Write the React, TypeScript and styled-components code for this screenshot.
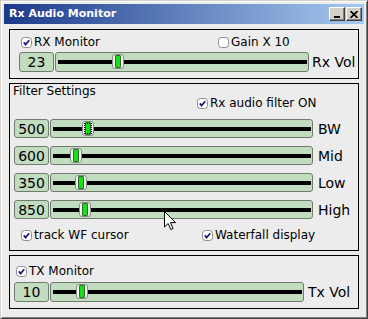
import React from 'react';
import styled, { createGlobalStyle } from 'styled-components';

const GlobalStyle = createGlobalStyle`
    html, body {
        margin: 0;
        padding: 0;
        background: #ececec;
    }
    body {
        font-family: "DejaVu Sans", "Liberation Sans", sans-serif;
        color: #000;
    }
`;

const Window = styled.div`
    position: relative;
    width: 368px;
    height: 319px;
    box-sizing: border-box;
    border: 1px solid;
    border-color: #d4d0c8 #404040 #404040 #d4d0c8;
    box-shadow: inset 1px 1px #ffffff, inset -1px -1px #808080;
    padding: 3px;
    background: #ececec;
    display: flex;
    flex-direction: column;
`;

const TitleBar = styled.div`
    height: 20px;
    flex: none;
    display: flex;
    align-items: center;
    justify-content: space-between;
    padding: 0 2px 0 5px;
    background: linear-gradient(to right, #1c3a8a, #a6caf0);
`;

const Title = styled.span`
    color: #fff;
    font-weight: bold;
    font-size: 11px;
    line-height: 14px;
`;

const TitleButtons = styled.div`
    display: flex;
    gap: 1px;
`;

const TitleButton = styled.div`
    width: 16px;
    height: 14px;
    box-sizing: border-box;
    background: #d4d0c8;
    border: 1px solid;
    border-color: #ffffff #404040 #404040 #ffffff;
    box-shadow: inset -1px -1px #808080;
    display: flex;
    align-items: center;
    justify-content: center;
`;

const Content = styled.div`
    flex: 1;
    display: flex;
    flex-direction: column;
    gap: 4px;
    padding: 5px 5px 6px 5px;
`;

const Group = styled.div<{ $h: number; $pt: number }>`
    height: ${p => p.$h}px;
    box-sizing: border-box;
    border: 1px solid #000;
    padding-top: ${p => p.$pt}px;
    display: flex;
    flex-direction: column;
`;

const GroupTitle = styled.div`
    font-size: 12px;
    line-height: 12px;
    height: 12px;
    padding-left: 3px;
`;

const CheckRow = styled.div<{ $pl: number; $col?: number; $h?: number; $mt?: number }>`
    display: grid;
    grid-template-columns: ${p => (p.$col ? `${p.$col}px auto` : 'auto')};
    justify-content: start;
    align-items: center;
    height: ${p => p.$h ?? 14}px;
    margin-top: ${p => p.$mt ?? 0}px;
    padding-left: ${p => p.$pl}px;
`;

const CheckLabel = styled.label<{ $lh?: number }>`
    display: flex;
    align-items: center;
    gap: 2px;
    font-size: 12px;
    line-height: ${p => p.$lh ?? 14}px;
    white-space: nowrap;
`;

const Box = styled.span`
    width: 11px;
    height: 11px;
    display: block;
`;

const SliderRows = styled.div<{ $mt: number }>`
    display: flex;
    flex-direction: column;
    gap: 8px;
    margin-top: ${p => p.$mt}px;
`;

const Row = styled.div<{ $pl: number; $h: number; $sw: number; $lg: number }>`
    display: grid;
    grid-template-columns: 35px ${p => p.$sw}px auto;
    column-gap: 1px;
    align-items: center;
    height: ${p => p.$h}px;
    padding-left: ${p => p.$pl}px;

    & > span:last-child {
        margin-left: ${p => p.$lg}px;
    }
`;

const ValueBox = styled.div`
    height: 100%;
    box-sizing: border-box;
    background: #c2dcc0;
    border: 1px solid #707a6e;
    border-radius: 3px;
    font-size: 14px;
    display: flex;
    align-items: center;
    justify-content: center;
`;

const Track = styled.div`
    position: relative;
    height: 100%;
    box-sizing: border-box;
    background: #c2dcc0;
    border: 1px solid #707a6e;
    border-radius: 3px;

    &::before {
        content: '';
        position: absolute;
        left: 2px;
        right: 1px;
        top: 50%;
        height: 4px;
        margin-top: -2px;
        background: #000;
    }
`;

const Thumb = styled.div<{ $focus?: boolean }>`
    position: absolute;
    top: 50%;
    margin-top: -8px;
    width: 12px;
    height: 15px;
    box-sizing: border-box;
    background: #f4f4f4;
    border: 1px solid #8a8a8a;
    border-radius: 3px;
    display: flex;
    align-items: center;
    justify-content: center;
    outline: ${p => (p.$focus ? '1px dotted #000' : 'none')};
    outline-offset: -3px;
`;

const Grip = styled.div`
    width: 4px;
    height: 11px;
    background: #14e014;
    border: 1px solid #2e6a2e;
    border-radius: 1px;
`;

const SideLabel = styled.span`
    font-size: 14px;
    white-space: nowrap;
`;

const Pointer = styled.svg`
    position: absolute;
    left: 163px;
    top: 210px;
`;

const Check: React.FC<{ on: boolean }> = ({ on }) => (
    <Box>
        <svg width="11" height="11" viewBox="0 0 11 11">
            <rect x="0.5" y="0.5" width="10" height="10" rx="3" fill="#fff" stroke="#8c8c8c" />
            {on && <path d="M2.8 5.4 L4.6 7.6 L8.2 3.2" fill="none" stroke="#1a1a7a" strokeWidth="1.7" />}
        </svg>
    </Box>
);

type SliderProps = {
    value: string;
    frac: number;
    label: string;
    sw: number;
    pl: number;
    h: number;
    lg: number;
    focus?: boolean;
};

const SliderRow: React.FC<SliderProps> = ({ value, frac, label, sw, pl, h, lg, focus }) => (
    <Row $pl={pl} $h={h} $sw={sw} $lg={lg}>
        <ValueBox>{value}</ValueBox>
        <Track>
            <Thumb $focus={focus} style={{ left: 1 + frac * (sw - 16) }}>
                <Grip />
            </Thumb>
        </Track>
        <SideLabel>{label}</SideLabel>
    </Row>
);

const App: React.FC = () => {
    return (
        <>
            <GlobalStyle />
            <Window>
                <TitleBar>
                    <Title>Rx Audio Monitor</Title>
                    <TitleButtons>
                        <TitleButton>
                            <svg width="8" height="8" viewBox="0 0 8 8">
                                <rect x="1" y="6" width="6" height="2" fill="#000" />
                            </svg>
                        </TitleButton>
                        <TitleButton>
                            <svg width="8" height="7" viewBox="0 0 8 7">
                                <path d="M0.5 0 L7.5 7 M7.5 0 L0.5 7" stroke="#000" strokeWidth="1.6" />
                            </svg>
                        </TitleButton>
                    </TitleButtons>
                </TitleBar>
                <Content>
                    <Group $h={50} $pt={5}>
                        <CheckRow $pl={11} $col={197}>
                            <CheckLabel><Check on />RX Monitor</CheckLabel>
                            <CheckLabel><Check on={false} />Gain X 10</CheckLabel>
                        </CheckRow>
                        <SliderRows $mt={3}>
                            <SliderRow value="23" frac={0.229} label="Rx Vol" sw={254} pl={9} h={20} lg={2} />
                        </SliderRows>
                    </Group>
                    <Group $h={168} $pt={1}>
                        <GroupTitle>Filter Settings</GroupTitle>
                        <CheckRow $pl={187} $h={12}>
                            <CheckLabel $lh={12}><Check on />Rx audio filter ON</CheckLabel>
                        </CheckRow>
                        <SliderRows $mt={10}>
                            <SliderRow value="500" frac={0.121} label="BW" sw={263} pl={4} h={19} lg={4} focus />
                            <SliderRow value="600" frac={0.072} label="Mid" sw={263} pl={4} h={19} lg={4} />
                            <SliderRow value="350" frac={0.092} label="Low" sw={263} pl={4} h={19} lg={4} />
                            <SliderRow value="850" frac={0.109} label="High" sw={263} pl={4} h={19} lg={4} />
                        </SliderRows>
                        <CheckRow $pl={11} $col={181} $mt={9}>
                            <CheckLabel><Check on />track WF cursor</CheckLabel>
                            <CheckLabel><Check on />Waterfall display</CheckLabel>
                        </CheckRow>
                    </Group>
                    <Group $h={54} $pt={8}>
                        <CheckRow $pl={6}>
                            <CheckLabel><Check on />TX Monitor</CheckLabel>
                        </CheckRow>
                        <SliderRows $mt={4}>
                            <SliderRow value="10" frac={0.1} label="Tx Vol" sw={254} pl={4} h={20} lg={3} />
                        </SliderRows>
                    </Group>
                </Content>
                <Pointer width="13" height="20" viewBox="0 0 13 20">
                    <path d="M0.5 0.5 L0.5 16 L4.2 12.5 L6.8 18.6 L9 17.6 L6.5 11.6 L11.5 11.6 Z" fill="#fff" stroke="#000" strokeWidth="1" strokeLinejoin="miter" />
                </Pointer>
            </Window>
        </>
    );
};

export default App;
